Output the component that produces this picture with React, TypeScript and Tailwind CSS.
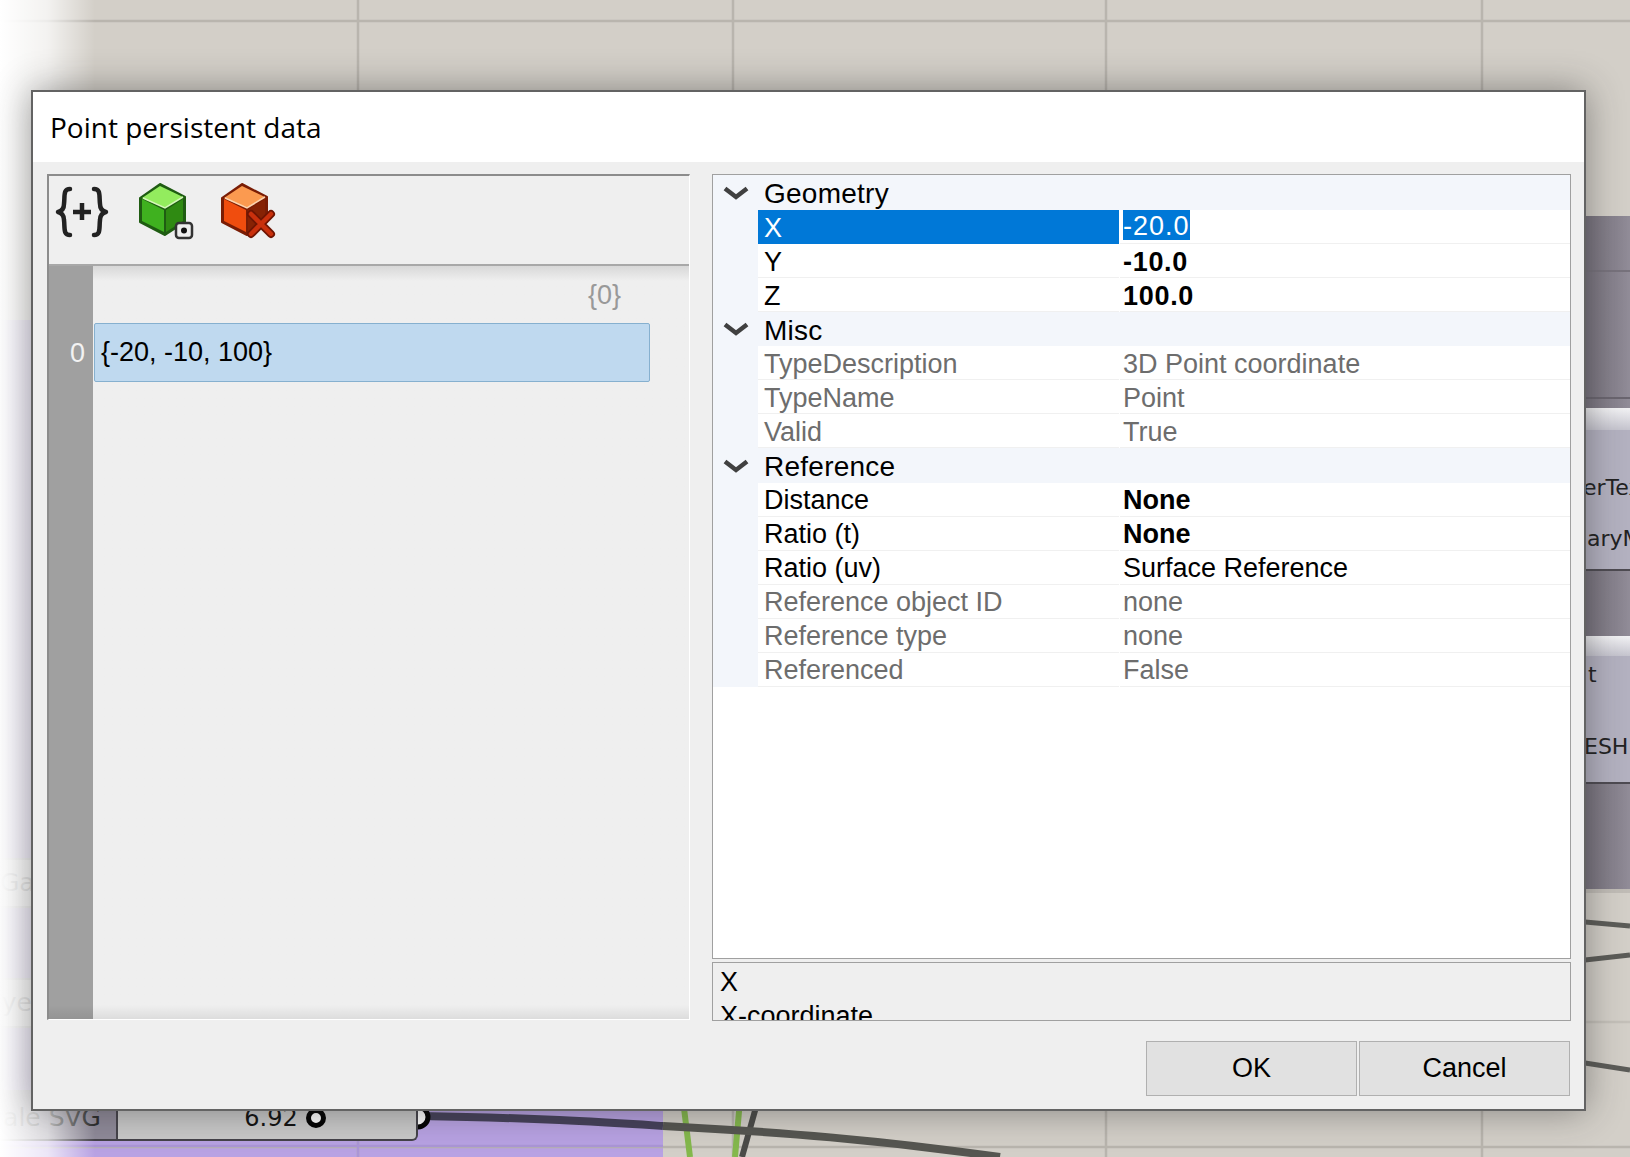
import React from "react";

type Row = { label: string; value: string; muted?: boolean; bold?: boolean; selected?: boolean; wide?: boolean };
type Group = { name: string; height: string; leading: string; rows: Row[] };

const groups: Group[] = [
  {
    name: "Geometry",
    height: "h-[35px]",
    leading: "leading-[37px]",
    rows: [
      { label: "X", value: "-20.0", bold: true, selected: true, wide: true },
      { label: "Y", value: "-10.0", bold: true, wide: true },
      { label: "Z", value: "100.0", bold: true, wide: true },
    ],
  },
  {
    name: "Misc",
    height: "h-[34px]",
    leading: "leading-[37px]",
    rows: [
      { label: "TypeDescription", value: "3D Point coordinate", muted: true },
      { label: "TypeName", value: "Point", muted: true },
      { label: "Valid", value: "True", muted: true },
    ],
  },
  {
    name: "Reference",
    height: "h-[35px]",
    leading: "leading-[35px]",
    rows: [
      { label: "Distance", value: "None", bold: true },
      { label: "Ratio (t)", value: "None", bold: true },
      { label: "Ratio (uv)", value: "Surface Reference" },
      { label: "Reference object ID", value: "none", muted: true },
      { label: "Reference type", value: "none", muted: true },
      { label: "Referenced", value: "False", muted: true },
    ],
  },
];

function CanvasDrawing() {
  return (
    <svg className="absolute left-0 top-0" width="1630" height="1157" viewBox="0 0 1630 1157" fill="none">
      <rect x="0" y="1100" width="663" height="57" fill="#b8a2e3" />
      <g stroke="#b9b5ae" strokeWidth="2.5">
        <path d="M0 21H1630M0 1147H1630M358 0V1157M733 0V1157M1106 0V1157M1482 0V1157" />
      </g>
      <path d="M0 1146H663M358 1100V1157" stroke="#ab96d6" strokeWidth="2.5" />
      <path d="M1585 1022H1630" stroke="#c4c0b9" strokeWidth="2.5" />
      <g stroke="#5c5c58" strokeWidth="5">
        <path d="M1585 922L1630 926M1585 960L1630 955M1585 1063L1630 1070" />
      </g>
      <path d="M683 1100L690 1157M740 1100L735 1157" stroke="#84b84c" strokeWidth="6" />
      <path d="M758 1100L742 1157" stroke="#4b4b48" strokeWidth="6" />
      <path d="M420 1116C540 1118 600 1122 663 1126" stroke="#45405a" strokeWidth="8" />
      <path d="M663 1126C780 1132 880 1140 1000 1157" stroke="#565651" strokeWidth="8" />
      <circle cx="418" cy="1117" r="10" fill="#fff" stroke="#000" strokeWidth="5" />
      <path d="M1585 621L1630 613" stroke="#84b84c" strokeWidth="5" />
      <path d="M1585 867L1630 865" stroke="#3f3c42" strokeWidth="5" />
    </svg>
  );
}

function BracesIcon() {
  return (
    <svg width="54" height="52" viewBox="0 0 54 52" fill="none" stroke="#222" strokeLinecap="round" strokeLinejoin="round">
      <path d="M15 3C8 3 10 10 9 18C9 23 7 25 3 26C7 27 9 29 9 34C10 42 8 49 15 49" strokeWidth="4.5" />
      <path d="M39 3C46 3 44 10 45 18C45 23 47 25 51 26C47 27 45 29 45 34C44 42 46 49 39 49" strokeWidth="4.5" />
      <path d="M27 17V34M18 26H36" strokeWidth="4.5" strokeLinecap="butt" />
    </svg>
  );
}

function GreenCube() {
  return (
    <svg width="56" height="58" viewBox="0 0 56 58">
      <path d="M22 2L47 15V40L27 53L2 40V16Z" fill="#1f5c12" stroke="#1f5c12" strokeWidth="2" strokeLinejoin="round" />
      <path d="M22 4L45 15L27 26L4 16Z" fill="#93ec5e" />
      <path d="M4 17L26 28V50L4 39Z" fill="#3fb11f" />
      <path d="M28 28L45 17V39L28 50Z" fill="#2f8a12" />
      <path d="M5 16L27 26L45 15" fill="none" stroke="#d3f7b8" strokeWidth="1.5" />
      <rect x="38" y="41" width="16" height="15" rx="3" fill="#eee" stroke="#333" strokeWidth="2.5" />
      <circle cx="46" cy="48.5" r="3" fill="#111" />
    </svg>
  );
}

function RedCube() {
  return (
    <svg width="56" height="58" viewBox="0 0 56 58">
      <path d="M22 2L47 15V40L27 53L2 40V16Z" fill="#7a1d05" stroke="#7a1d05" strokeWidth="2" strokeLinejoin="round" />
      <path d="M22 4L45 15L27 26L4 16Z" fill="#fb9a50" />
      <path d="M4 17L26 28V50L4 39Z" fill="#f04d0e" />
      <path d="M28 28L45 17V39L28 50Z" fill="#862204" />
      <path d="M5 16L27 26L45 15" fill="none" stroke="#fcd3ae" strokeWidth="1.5" />
      <path d="M31 32L51 52M51 32L31 52" stroke="#6f1503" strokeWidth="8" strokeLinecap="round" />
      <path d="M31 32L51 52M51 32L31 52" stroke="#c9300c" strokeWidth="4.5" strokeLinecap="round" />
    </svg>
  );
}

function Chevron() {
  return (
    <svg width="26" height="14" viewBox="0 0 26 14" fill="none">
      <path d="M2 2.5L13 11L24 2.5" stroke="#404040" strokeWidth="4.5" />
    </svg>
  );
}

function GridRow({ row, leading }: { row: Row; leading: string }) {
  const tone = row.muted ? "text-[#6d6d6d]" : "text-black";
  return (
    <div className={`flex h-[34px] ${leading}`}>
      <div className="w-[45px] shrink-0 bg-[#f3f6fb]" />
      <div
        className={
          row.selected
            ? "w-[361px] shrink-0 bg-[#0078d7] pl-[6px] text-white"
            : `w-[361px] shrink-0 border-b border-[#f0f0f0] pl-[6px] ${tone}`
        }
      >
        {row.label}
      </div>
      <div
        className={`ml-px flex-1 border-b border-[#f0f0f0] pl-[3px] ${tone} ${row.bold ? "font-bold" : ""} ${row.wide ? "tracking-[0.7px]" : ""}`}
      >
        {row.selected ? (
          <span className="inline-block h-[30px] bg-[#0078d7] align-top font-normal leading-[33px] tracking-[1px] text-white">{row.value}</span>
        ) : (
          row.value
        )}
      </div>
    </div>
  );
}

const canvasText = "font-['DejaVu_Sans',sans-serif] text-[22px] leading-[36px] whitespace-nowrap text-[#222]";

export default function App() {
  return (
    <div className="relative h-[1157px] w-[1630px] overflow-hidden bg-[#d3cfc8] font-['Liberation_Sans',Arial,sans-serif] text-[27px]">
      <CanvasDrawing />

      {/* Components lying on the canvas, right of the dialog */}
      <div className="absolute left-[1570px] top-[216px] h-[673px] w-[70px] bg-gradient-to-r from-[#6f6a74] to-[#97929e]">
        <div className="mt-[54px] h-[2px] bg-[#77727c]" />
        <div className="mt-[125px] h-[2px] bg-[#6a656f]" />
      </div>
      <div className="absolute left-[1570px] top-[408px] flex h-[163px] w-[70px] flex-col border-b-2 border-[#4e4b52] bg-[#b3b1c0]">
        <div className="h-[22px] bg-gradient-to-b from-[#f2f2f4] to-[#c5c4ce]" />
        <div className={`mt-[40px] pl-[13px] ${canvasText}`}>erTex</div>
        <div className={`mt-[15px] pl-[17px] ${canvasText}`}>aryMesh</div>
      </div>
      <div className="absolute left-[1570px] top-[636px] flex h-[148px] w-[70px] flex-col border-b-2 border-[#4e4b52] bg-[#b3b1c0]">
        <div className="h-[20px] bg-gradient-to-b from-[#f2f2f4] to-[#c5c4ce]" />
        <div className={`mt-[1px] pl-[18px] ${canvasText}`}>t</div>
        <div className={`mt-[36px] pl-[14px] ${canvasText}`}>ESH</div>
      </div>
      <div className="absolute left-[1570px] top-[889px] h-[4px] w-[70px] bg-[#c0bcb6]" />

      {/* Components lying on the canvas, left of and under the dialog */}
      <div className="absolute left-0 top-[320px] h-[780px] w-[40px] bg-[#a892da]" />
      <div className="absolute left-0 top-[858px] h-[50px] w-[32px] border-y-2 border-[#a5a5a5] bg-[#ddd] pt-[4px] font-['DejaVu_Sans',sans-serif] text-[25px] text-[#555]">Ga</div>
      <div className="absolute left-0 top-[978px] h-[50px] w-[32px] border-y-2 border-[#a5a5a5] bg-[#ddd] pt-[4px] text-right font-['DejaVu_Sans',sans-serif] text-[25px] text-[#555]">ye</div>
      <div className="absolute left-0 top-[1090px] flex h-[51px] w-[118px] justify-end border-r-2 border-b-2 border-[#45434a] bg-[#8f8a99] pt-[10px] pr-[15px] font-['DejaVu_Sans',sans-serif] text-[25px] leading-[36px] whitespace-nowrap text-[#2c2c2c]">
        <span className="shrink-0">cale SVG</span>
      </div>
      <div className="absolute left-[118px] top-[1090px] flex h-[51px] w-[300px] items-start justify-center rounded-br-[6px] border-r-2 border-b-2 border-[#45434a] bg-[#c9c9c9] pt-[13px] pl-[36px]">
        <span className="pr-[8px] font-['DejaVu_Sans',sans-serif] text-[24px] leading-[30px] text-[#111]">6.92</span>
        <span className="mt-[5px] h-[20px] w-[20px] rounded-full border-[5px] border-black bg-white" />
      </div>

      {/* White fade at the left edge of the picture */}
      <div className="absolute left-0 top-0 h-[1157px] w-[95px] bg-gradient-to-r from-white via-[#ffffffbb] to-transparent" />

      {/* Dialog */}
      <div className="absolute left-[31px] top-[90px] flex h-[1021px] w-[1555px] flex-col border-2 border-[#636363] bg-[#efefef] shadow-[0_0_34px_rgba(40,40,40,0.45)]">
        <div className="flex h-[70px] shrink-0 items-center bg-white pl-[17px] font-['Open_Sans',sans-serif] text-[28px] text-black">
          Point persistent data
        </div>

        <div className="flex flex-1 pt-[12px] pl-[14px]">
          {/* Data tree */}
          <div className="flex h-[846px] w-[643px] shrink-0 flex-col border-t-2 border-l-2 border-t-[#8c8c8c] border-l-[#8c8c8c] border-r border-b border-r-white border-b-white">
            <div className="flex h-[90px] shrink-0 items-start border-b-2 border-[#a8a8a8] pt-[8px] pl-[6px]">
              <span className="mt-[2px]">
                <BracesIcon />
              </span>
              <span className="ml-[29px] mt-[-2px]">
                <GreenCube />
              </span>
              <span className="ml-[26px] mt-[-2px]">
                <RedCube />
              </span>
            </div>
            <div className="relative flex flex-1">
              <div className="w-[44px] shrink-0 bg-[#a0a0a0] pt-[71px] pr-[8px] text-right leading-[32px] text-[#f2f2f2]">0</div>
              <div className="flex-1 bg-gradient-to-b from-[#d8d8d8] via-[#efefef] via-[2%] to-[#efefef] pl-px">
                <div className="mb-[8px] flex h-[49px] items-center justify-end pr-[68px] pt-[10px] text-[#999]">{"{0}"}</div>
                <div className="flex h-[59px] w-[556px] items-center rounded-[2px] border border-[#86b0cf] bg-[#bfd9ef] pl-[6px] text-black">
                  {"{-20, -10, 100}"}
                </div>
              </div>
              <div className="absolute right-0 bottom-0 left-0 h-[14px] bg-gradient-to-b from-transparent to-[#00000014]" />
            </div>
          </div>

          {/* Property grid and description */}
          <div className="ml-[22px] flex h-[848px] w-[859px] shrink-0 flex-col gap-[3px]">
            <div className="h-[785px] shrink-0 overflow-hidden border border-[#a0a0a0] bg-white">
              {groups.map((g) => (
                <div key={g.name}>
                  <div className={`flex ${g.height} items-center bg-[#f3f6fb] text-[28px] leading-[34px] tracking-[0.25px] text-black`}>
                    <span className="flex w-[52px] shrink-0 justify-center pr-[6px]">
                      <Chevron />
                    </span>
                    <span className="-ml-px pt-[3px]">{g.name}</span>
                  </div>
                  {g.rows.map((r) => (
                    <GridRow key={r.label} row={r} leading={g.leading} />
                  ))}
                </div>
              ))}
            </div>
            <div className="h-[59px] shrink-0 overflow-hidden border border-[#a0a0a0] bg-[#efefef] pl-[7px] leading-[34px] text-black">
              <div className="mt-[2px]">X</div>
              <div>X-coordinate</div>
            </div>
          </div>
        </div>

        <div className="flex h-[70px] shrink-0 items-start justify-end gap-[2px] pr-[14px] pt-[2px]">
          <button className="h-[55px] w-[211px] border border-[#b0b0b0] bg-[#e1e1e1] text-black">OK</button>
          <button className="h-[55px] w-[211px] border border-[#b0b0b0] bg-[#e1e1e1] text-black">Cancel</button>
        </div>
      </div>
    </div>
  );
}
